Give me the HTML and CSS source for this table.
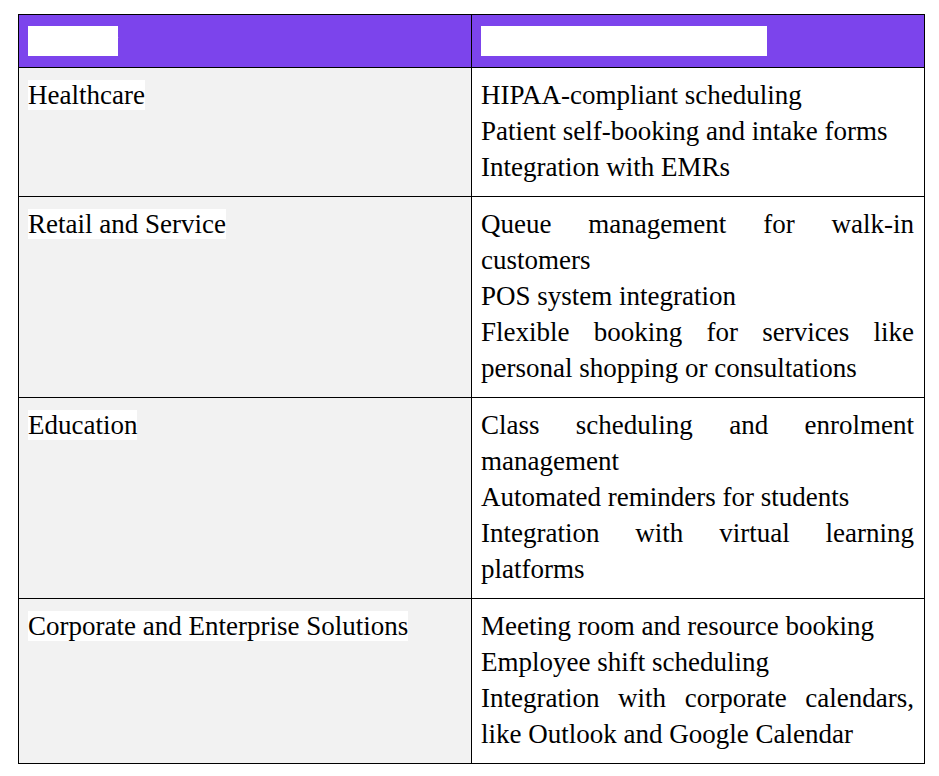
FILE: index.html
```html
<!DOCTYPE html>
<html>
<head>
<meta charset="utf-8">
<link rel="stylesheet" href="styles.css">
</head>
<body>
<table class="grid">
  <thead>
    <tr>
      <th class="head"><span class="hl">Industry</span></th>
      <th class="head"><span class="hl">Key Features and Benefits</span></th>
    </tr>
  </thead>
  <tbody>
    <tr>
      <td class="ind"><span class="hl">Healthcare</span></td>
      <td class="feat">
        <p>HIPAA-compliant scheduling</p>
        <p>Patient self-booking and intake forms</p>
        <p>Integration with EMRs</p>
      </td>
    </tr>
    <tr>
      <td class="ind"><span class="hl">Retail and Service</span></td>
      <td class="feat">
        <p>Queue management for walk-in customers</p>
        <p>POS system integration</p>
        <p>Flexible booking for services like personal shopping or consultations</p>
      </td>
    </tr>
    <tr>
      <td class="ind"><span class="hl">Education</span></td>
      <td class="feat">
        <p>Class scheduling and enrolment management</p>
        <p>Automated reminders for students</p>
        <p>Integration with virtual learning platforms</p>
      </td>
    </tr>
    <tr>
      <td class="ind"><span class="hl">Corporate and Enterprise Solutions</span></td>
      <td class="feat">
        <p>Meeting room and resource booking</p>
        <p>Employee shift scheduling</p>
        <p>Integration with corporate calendars, like Outlook and Google Calendar</p>
      </td>
    </tr>
  </tbody>
</table>
</body>
</html>
```
FILE: styles.css
```css
html, body {
  margin: 0;
  padding: 0;
  background: #ffffff;
}

body {
  font-family: "Liberation Serif", "Times New Roman", serif;
  font-size: 27px;
  line-height: 36px;
  color: #000000;
}

.grid {
  border-collapse: collapse;
  margin: 14px 0 0 18px;
  width: 907px;
  table-layout: fixed;
}

.grid th,
.grid td {
  border: 1px solid #000000;
  width: 50%;
  vertical-align: top;
  text-align: left;
}

.head {
  background: #7c44ec;
  color: #ffffff;
  font-weight: normal;
  padding: 8px 9px 8px 9px;
}

.hl {
  background: #ffffff;
}

.ind {
  background: #f2f2f2;
  padding: 9px 9px 11px 9px;
}

.feat {
  background: #ffffff;
  padding: 9px 10px 11px 9px;
}

.feat p {
  margin: 0;
  text-align: justify;
}
```
